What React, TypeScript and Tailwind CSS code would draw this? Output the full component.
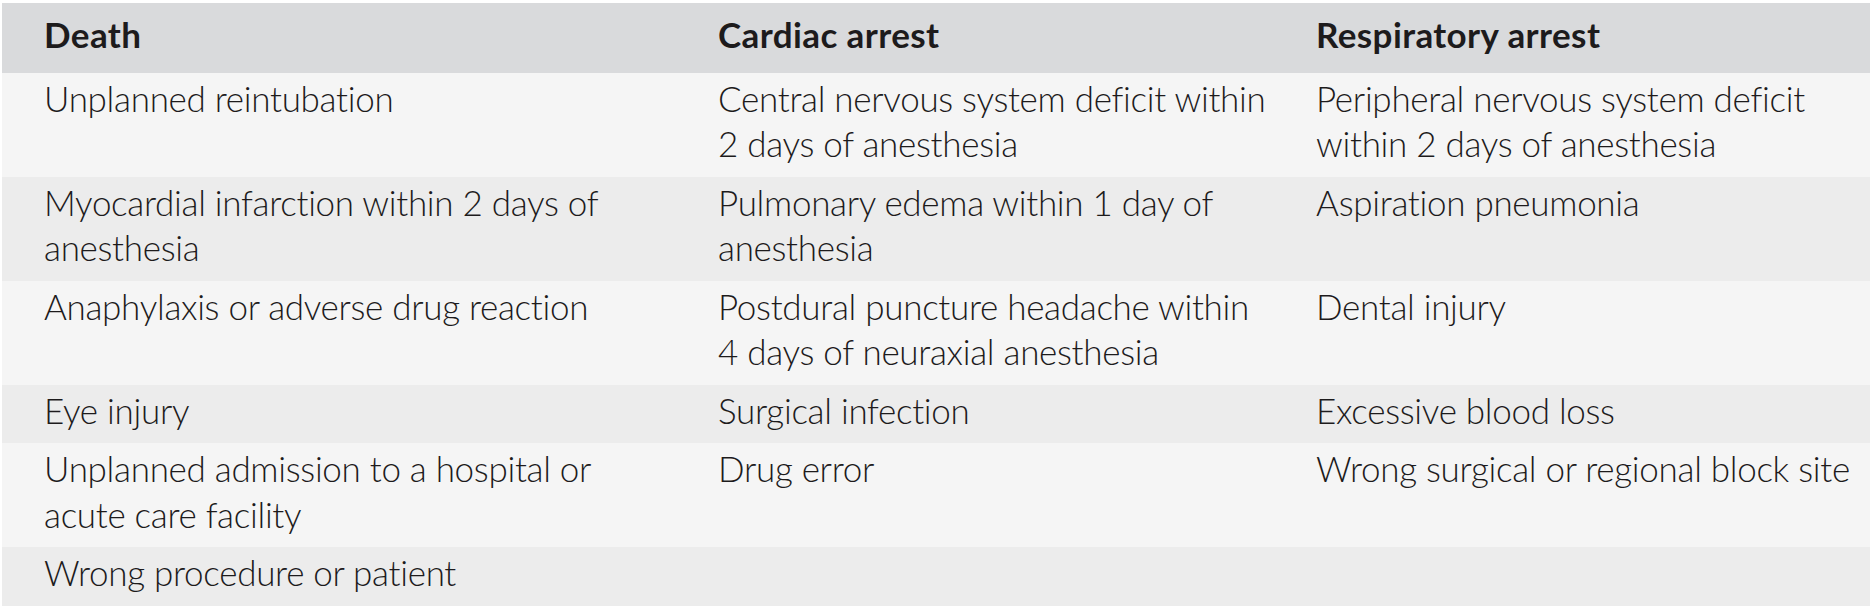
import React from "react";

const rows: string[][][] = [
  [["Unplanned reintubation"], ["Central nervous system deficit within", "2 days of anesthesia"], ["Peripheral nervous system deficit", "within 2 days of anesthesia"]],
  [["Myocardial infarction within 2 days of", "anesthesia"], ["Pulmonary edema within 1 day of", "anesthesia"], ["Aspiration pneumonia"]],
  [["Anaphylaxis or adverse drug reaction"], ["Postdural puncture headache within", "4 days of neuraxial anesthesia"], ["Dental injury"]],
  [["Eye injury"], ["Surgical infection"], ["Excessive blood loss"]],
  [["Unplanned admission to a hospital or", "acute care facility"], ["Drug error"], ["Wrong surgical or regional block site"]],
  [["Wrong procedure or patient"], [], []],
];

const headers = ["Death", "Cardiac arrest", "Respiratory arrest"];

export default function App() {
  return (
    <div
      className="w-[1872px] h-[608px] bg-white pt-[3px] px-[2px] text-[#1d1b1c] [font-variant-ligatures:none]"
      style={{ fontFamily: "Lato, 'Open Sans', 'Liberation Sans', sans-serif" }}
    >
      <div className="grid grid-cols-[674px_598px_1fr] bg-[#d9dadc] pt-[9px] pb-[15px] text-[35px] leading-[45.5px] font-bold tracking-[0.4px]">
        {headers.map((h) => (
          <div key={h} className="pl-[42px] whitespace-nowrap">
            {h}
          </div>
        ))}
      </div>
      {rows.map((row, i) => (
        <div
          key={i}
          className={`grid grid-cols-[674px_598px_1fr] pt-[3px] pb-[10px] text-[35px] leading-[45.5px] font-light tracking-[-0.3px] ${
            i % 2 === 0 ? "bg-[#f5f5f5]" : "bg-[#ececec]"
          }`}
        >
          {row.map((cell, j) => (
            <div key={j} className="pl-[42px] whitespace-nowrap">
              {cell.map((line, k) => (
                <div key={k}>{line}</div>
              ))}
            </div>
          ))}
        </div>
      ))}
    </div>
  );
}
